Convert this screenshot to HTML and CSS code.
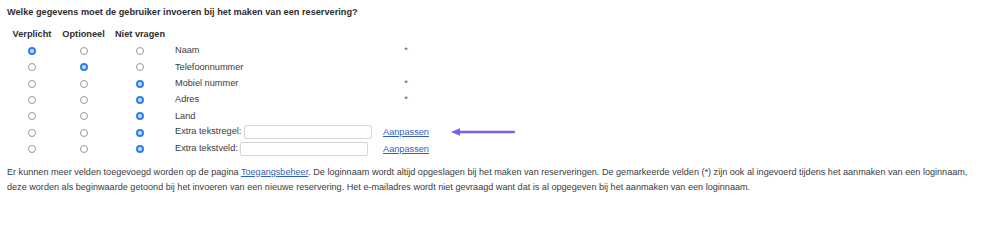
FILE: index.html
```html
<!DOCTYPE html>
<html lang="nl">
<head>
<meta charset="utf-8">
<title>Gegevens reservering</title>
<link rel="stylesheet" href="styles.css">
</head>
<body>
<h4 class="title">Welke gegevens moet de gebruiker invoeren bij het maken van een reservering?</h4>
<table class="fields">
  <thead>
    <tr>
      <th class="c1">Verplicht</th>
      <th class="c2">Optioneel</th>
      <th class="c3">Niet vragen</th>
      <th class="c4"></th>
      <th class="c5"></th>
    </tr>
  </thead>
  <tbody>
    <tr>
      <td class="r"><input type="radio" name="f1" checked></td>
      <td class="r"><input type="radio" name="f1"></td>
      <td class="r"><input type="radio" name="f1"></td>
      <td class="lbl">Naam</td>
      <td class="mark">*</td>
    </tr>
    <tr>
      <td class="r"><input type="radio" name="f2"></td>
      <td class="r"><input type="radio" name="f2" checked></td>
      <td class="r"><input type="radio" name="f2"></td>
      <td class="lbl">Telefoonnummer</td>
      <td class="mark"></td>
    </tr>
    <tr>
      <td class="r"><input type="radio" name="f3"></td>
      <td class="r"><input type="radio" name="f3"></td>
      <td class="r"><input type="radio" name="f3" checked></td>
      <td class="lbl">Mobiel nummer</td>
      <td class="mark">*</td>
    </tr>
    <tr>
      <td class="r"><input type="radio" name="f4"></td>
      <td class="r"><input type="radio" name="f4"></td>
      <td class="r"><input type="radio" name="f4" checked></td>
      <td class="lbl">Adres</td>
      <td class="mark">*</td>
    </tr>
    <tr>
      <td class="r"><input type="radio" name="f5"></td>
      <td class="r"><input type="radio" name="f5"></td>
      <td class="r"><input type="radio" name="f5" checked></td>
      <td class="lbl">Land</td>
      <td class="mark"></td>
    </tr>
    <tr>
      <td class="r"><input type="radio" name="f6"></td>
      <td class="r"><input type="radio" name="f6"></td>
      <td class="r"><input type="radio" name="f6" checked></td>
      <td class="lbl">Extra tekstregel: <input class="txt" type="text"></td>
      <td class="mark link-cell"><a href="#">Aanpassen</a><span class="arrow"><svg width="64" height="8" viewBox="0 0 64 8"><path d="M63 4H6" stroke="#7760ea" stroke-width="2.4" stroke-linecap="round"/><path d="M0 4L9 0.3V7.7Z" fill="#7760ea"/></svg></span></td>
    </tr>
    <tr>
      <td class="r"><input type="radio" name="f7"></td>
      <td class="r"><input type="radio" name="f7"></td>
      <td class="r"><input type="radio" name="f7" checked></td>
      <td class="lbl">Extra tekstveld: <input class="txt" type="text"></td>
      <td class="mark"><a href="#">Aanpassen</a></td>
    </tr>
  </tbody>
</table>
<p class="note">Er kunnen meer velden toegevoegd worden op de pagina <a href="#">Toegangsbeheer</a>. De loginnaam wordt altijd opgeslagen bij het maken van reserveringen. De gemarkeerde velden (*) zijn ook al ingevoerd tijdens het aanmaken van een loginnaam, deze worden als beginwaarde getoond bij het invoeren van een nieuwe reservering. Het e-mailadres wordt niet gevraagd want dat is al opgegeven bij het aanmaken van een loginnaam.</p>
</body>
</html>
```

FILE: styles.css
```css
html, body {
  background: #ffffff;
}
body {
  margin: 0;
  padding: 6px 7px 0 7px;
  font-family: "Liberation Sans", Arial, sans-serif;
  font-size: 9.2px;
  color: #3b3b3b;
}
.title {
  margin: 0 0 8px 0;
  font-size: 9.2px;
  line-height: 12px;
  font-weight: bold;
  color: #2e2e2e;
}
.fields {
  border-collapse: collapse;
  border-spacing: 0;
  table-layout: fixed;
}
.fields th {
  font-weight: bold;
  color: #2e2e2e;
  padding: 0;
  height: 16px;
  line-height: 12px;
  text-align: center;
  white-space: nowrap;
}
.fields th.c1 { width: 50px; }
.fields th.c2 { width: 53px; }
.fields th.c3 { width: 60px; }
.fields th.c4 { width: 208px; }
.fields th.c5 { width: 56px; }
.fields td {
  padding: 0;
  height: 16.4px;
  line-height: 12px;
  white-space: nowrap;
}
.fields td.r {
  text-align: center;
}
.fields td.lbl {
  text-align: left;
  padding-left: 5px;
}
.fields td.mark {
  text-align: center;
  color: #555;
}
.link-cell {
  position: relative;
}
.arrow {
  position: absolute;
  left: 73px;
  top: 4px;
  line-height: 0;
}
input[type="radio"] {
  -webkit-appearance: none;
  appearance: none;
  width: 8px;
  height: 8px;
  margin: 0;
  border: 1px solid #9a9a9a;
  border-radius: 50%;
  background: #fff;
  vertical-align: middle;
  box-sizing: border-box;
}
input[type="radio"]:checked {
  border: 2.5px solid #2f7ef0;
  background: #cfe1fb;
}
.txt {
  width: 128px;
  height: 14px;
  box-sizing: border-box;
  margin: 0;
  border: 1px solid #d6d6d6;
  border-radius: 2px;
  vertical-align: middle;
  font-size: 9px;
  padding: 0 3px;
}
a {
  color: #2f5fbf;
  text-decoration: underline;
}
.note {
  margin: 8px 0 0 0;
  font-size: 9.1px;
  line-height: 15px;
  color: #3b3b3b;
}
```
